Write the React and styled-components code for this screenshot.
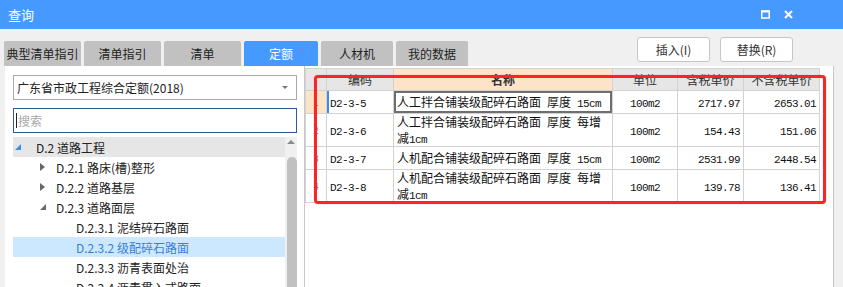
import React from 'react';
import styled, { createGlobalStyle } from 'styled-components';

const GlobalStyle = createGlobalStyle`
  html, body {
    margin: 0;
    padding: 0;
    background: #f0f0f0;
    font-family: "Noto Sans CJK SC", "Noto Sans", sans-serif;
  }
`;

const Window = styled.div`
  position: relative;
  width: 843px;
  height: 287px;
  overflow: hidden;
  display: flex;
  flex-direction: column;
  background: #f0f0f0;
`;

const TitleBar = styled.div`
  height: 29px;
  flex: none;
  display: flex;
  align-items: center;
  padding-left: 8px;
  background: #4599ff;
  color: #fff;
  font-size: 13px;
`;

const TitleControls = styled.div`
  margin-left: auto;
  margin-right: 50px;
  display: flex;
  align-items: center;
  gap: 14px;
`;

const Toolbar = styled.div`
  height: 37px;
  flex: none;
  display: flex;
  align-items: flex-end;
  padding-left: 4px;
`;

const Tabs = styled.div`
  display: flex;
  gap: 3px;
`;

const Tab = styled.div`
  width: ${(p) => p.$w}px;
  height: 25px;
  display: flex;
  align-items: center;
  justify-content: center;
  border-radius: 2px 2px 0 0;
  font-size: 12px;
  background: ${(p) => (p.$active ? '#4599ff' : '#c1c1c1')};
  color: ${(p) => (p.$active ? '#fff' : '#222')};
`;

const Actions = styled.div`
  align-self: flex-start;
  margin-top: 8px;
  margin-left: auto;
  margin-right: 50px;
  display: flex;
  gap: 10px;
`;

const Button = styled.button`
  width: 73px;
  height: 25px;
  padding: 0;
  border: 1px solid #c6c6c6;
  border-radius: 3px;
  background: #fff;
  color: #333;
  font-family: inherit;
  font-size: 12px;
`;

const Body = styled.div`
  flex: 1;
  display: flex;
  padding-left: 5px;
  min-height: 0;
`;

const LeftPanel = styled.div`
  width: 299px;
  flex: none;
  background: #fff;
  padding: 9px 7px 0 8px;
  box-sizing: border-box;
`;

const Select = styled.div`
  height: 25px;
  box-sizing: border-box;
  border: 1px solid #a9a9a9;
  display: flex;
  align-items: center;
  padding: 0 8px 0 3px;
  font-size: 12px;
  color: #222;

  &::after {
    content: '';
    margin-left: auto;
    border-left: 3px solid transparent;
    border-right: 3px solid transparent;
    border-top: 3px solid #777;
  }
`;

const Search = styled.div`
  margin-top: 8px;
  height: 25px;
  box-sizing: border-box;
  border: 1px solid #2c5a9a;
  display: flex;
  align-items: center;
  padding-left: 2px;
  font-size: 12px;
  color: #a8a8a8;

  &::before {
    content: '';
    width: 1px;
    height: 15px;
    background: #222;
    margin-right: 1px;
  }
`;

const Tree = styled.div`
  margin-top: 4px;
  display: flex;
  height: 160px;
`;

const TreeList = styled.div`
  flex: 1;
`;

const TreeRow = styled.div`
  height: 20px;
  display: flex;
  align-items: center;
  padding-left: ${(p) => 2 + p.$level * 20}px;
  font-size: 12px;
  white-space: nowrap;
  background: ${(p) => (p.$selected ? '#cce8ff' : p.$shade ? '#e6e6e6' : 'transparent')};
  color: ${(p) => (p.$selected ? '#3b7fd4' : '#222')};
`;

const Toggle = styled.span`
  width: 21px;
  flex: none;
  display: flex;
  align-items: center;
  padding-left: ${(p) => (p.$level === 0 ? 0 : 5)}px;
  box-sizing: border-box;
`;

const ScrollBar = styled.div`
  width: 12px;
  flex: none;
  display: flex;
  flex-direction: column;
  align-items: center;
  background: #f0f0f0;
`;

const ScrollArrow = styled.div`
  height: 20px;
  flex: none;
  display: flex;
  justify-content: center;
  padding-top: 3px;
  box-sizing: border-box;

  &::before {
    content: '';
    height: 0;
    border-left: 4px solid transparent;
    border-right: 4px solid transparent;
    border-bottom: 4px solid #8a8a8a;
  }
`;

const ScrollThumb = styled.div`
  flex: 1;
  width: 10px;
  margin-left: 2px;
  background: #c1c1c1;
  border-radius: 5px 5px 0 0;
`;

const RightPanel = styled.div`
  flex: 1;
  margin-right: 9px;
  padding-top: 2px;
  background: #fff;
  border-left: 1px solid #c8c8c8;
  border-right: 1px solid #c8c8c8;
`;

const Grid = styled.table`
  border-collapse: collapse;
  table-layout: fixed;
  width: 514px;
`;

const Head = styled.th`
  height: 21px;
  padding: 0;
  border: 1px solid #d2d2d2;
  font-size: 12px;
  line-height: 15px;
  font-weight: ${(p) => (p.$bold ? 700 : 400)};
  color: #333;
  background: ${(p) => (p.$peach ? '#fde4c9' : '#e6e6e6')};
`;

const Cell = styled.td`
  height: ${(p) => p.$h}px;
  box-sizing: border-box;
  padding: 0 3px;
  border: 1px solid #d2d2d2;
  font-size: 12px;
  line-height: 15px;
  color: #111;
  text-align: ${(p) => p.$align || 'left'};
  vertical-align: middle;
  overflow: hidden;
  background: ${(p) => (p.$peach ? '#fde4c9' : '#fff')};
  box-shadow: ${(p) =>
    p.$editing ? 'inset 0 0 0 2px #6f6f6f' : p.$focus ? 'inset 2px 0 0 #3a8ee6' : 'none'};
`;

const RowNo = styled.span`
  font-size: 9px;
  color: #666;
  display: block;
  text-align: center;
`;

const Mono = styled.span`
  font-family: "Liberation Mono", "DejaVu Sans Mono", monospace;
  font-size: 11px;
  letter-spacing: -0.6px;
  line-height: 11px;
`;

const Highlight = styled.div`
  position: absolute;
  left: 314px;
  top: 75px;
  width: 512px;
  height: 129px;
  box-sizing: border-box;
  border: 3px solid #ff2424;
  border-radius: 4px;
  box-shadow: 0 0 1px rgba(255, 40, 40, 0.6);
  pointer-events: none;
`;

const tabs = [
  { label: '典型清单指引', w: 77 },
  { label: '清单指引', w: 77 },
  { label: '清单', w: 77 },
  { label: '定额', w: 74, active: true },
  { label: '人材机', w: 72 },
  { label: '我的数据', w: 72 },
];

const tree = [
  { level: 0, label: 'D.2 道路工程', icon: 'open-blue', shade: true },
  { level: 1, label: 'D.2.1 路床(槽)整形', icon: 'closed' },
  { level: 1, label: 'D.2.2 道路基层', icon: 'closed' },
  { level: 1, label: 'D.2.3 道路面层', icon: 'open' },
  { level: 2, label: 'D.2.3.1 泥结碎石路面' },
  { level: 2, label: 'D.2.3.2 级配碎石路面', selected: true },
  { level: 2, label: 'D.2.3.3 沥青表面处治' },
  { level: 2, label: 'D.2.3.4 沥青贯入式路面' },
];

// name lines: the grid wraps the long ones after 每增
const rows = [
  { code: 'D2-3-5', name: ['人工拌合铺装级配碎石路面 厚度 15cm'], unit: '100m2', tax: '2717.97', net: '2653.01', h: 23 },
  { code: 'D2-3-6', name: ['人工拌合铺装级配碎石路面 厚度 每增', '减1cm'], unit: '100m2', tax: '154.43', net: '151.06', h: 33 },
  { code: 'D2-3-7', name: ['人机配合铺装级配碎石路面 厚度 15cm'], unit: '100m2', tax: '2531.99', net: '2448.54', h: 23 },
  { code: 'D2-3-8', name: ['人机配合铺装级配碎石路面 厚度 每增', '减1cm'], unit: '100m2', tax: '139.78', net: '136.41', h: 32 },
];

const TreeIcon = ({ type }) => {
  if (type === 'closed') {
    return (
      <svg width="5" height="8" viewBox="0 0 5 8">
        <polygon points="0,0 5,4 0,8" fill="#666" />
      </svg>
    );
  }
  if (type === 'open' || type === 'open-blue') {
    return (
      <svg width="6" height="6" viewBox="0 0 6 6">
        <polygon points="6,0 6,6 0,6" fill={type === 'open-blue' ? '#3d8fe8' : '#6a6a6a'} />
      </svg>
    );
  }
  return null;
};

// ascii runs (spaces, 15cm) use the narrow mono face like the grid's 宋体
const MixedText = ({ text }) =>
  text.split(/([\x20-\x7e]+)/).map((part, i) =>
    /^[\x20-\x7e]+$/.test(part) ? <Mono key={i}>{part}</Mono> : part
  );

const NameText = ({ lines }) =>
  lines.map((line, i) => (
    <React.Fragment key={i}>
      {i > 0 && <br />}
      <MixedText text={line} />
    </React.Fragment>
  ));

const App = () => {
  return (
    <>
      <GlobalStyle />
      <Window>
        <TitleBar>
          查询
          <TitleControls>
            <svg width="9" height="9" viewBox="0 0 9 9">
              <rect x="0.75" y="1" width="7.5" height="7" fill="none" stroke="#fff" strokeWidth="1.5" />
              <rect x="0" y="0.5" width="9" height="2" fill="#fff" />
            </svg>
            <svg width="9" height="9" viewBox="0 0 9 9">
              <path d="M1 1 L8 8 M8 1 L1 8" stroke="#fff" strokeWidth="2" />
            </svg>
          </TitleControls>
        </TitleBar>

        <Toolbar>
          <Tabs>
            {tabs.map((t) => (
              <Tab key={t.label} $w={t.w} $active={t.active}>
                {t.label}
              </Tab>
            ))}
          </Tabs>
          <Actions>
            <Button>插入(I)</Button>
            <Button>替换(R)</Button>
          </Actions>
        </Toolbar>

        <Body>
          <LeftPanel>
            <Select>广东省市政工程综合定额(2018)</Select>
            <Search>搜索</Search>
            <Tree>
              <TreeList>
                {tree.map((n) => (
                  <TreeRow key={n.label} $level={n.level} $selected={n.selected} $shade={n.shade}>
                    <Toggle $level={n.level}>
                      <TreeIcon type={n.icon} />
                    </Toggle>
                    {n.label}
                  </TreeRow>
                ))}
              </TreeList>
              <ScrollBar>
                <ScrollArrow />
                <ScrollThumb />
              </ScrollBar>
            </Tree>
          </LeftPanel>

          <RightPanel>
            <Grid>
              <colgroup>
                <col style={{ width: 21 }} />
                <col style={{ width: 67 }} />
                <col style={{ width: 219 }} />
                <col style={{ width: 65 }} />
                <col style={{ width: 66 }} />
                <col style={{ width: 76 }} />
              </colgroup>
              <thead>
                <tr>
                  <Head />
                  <Head>编码</Head>
                  <Head $peach $bold>名称</Head>
                  <Head>单位</Head>
                  <Head>含税单价</Head>
                  <Head>不含税单价</Head>
                </tr>
              </thead>
              <tbody>
                {rows.map((r, i) => (
                  <tr key={r.code}>
                    <Cell $h={r.h} $peach={i === 0} style={{ padding: 0 }}>
                      <RowNo>{i + 1}</RowNo>
                    </Cell>
                    <Cell $h={r.h} $focus={i === 0}>
                      <Mono>{r.code}</Mono>
                    </Cell>
                    <Cell $h={r.h} $editing={i === 0}>
                      <NameText lines={r.name} />
                    </Cell>
                    <Cell $h={r.h} $align="center">
                      <Mono>{r.unit}</Mono>
                    </Cell>
                    <Cell $h={r.h} $align="right">
                      <Mono>{r.tax}</Mono>
                    </Cell>
                    <Cell $h={r.h} $align="right">
                      <Mono>{r.net}</Mono>
                    </Cell>
                  </tr>
                ))}
              </tbody>
            </Grid>
          </RightPanel>
        </Body>

        <Highlight />
      </Window>
    </>
  );
};

export default App;
